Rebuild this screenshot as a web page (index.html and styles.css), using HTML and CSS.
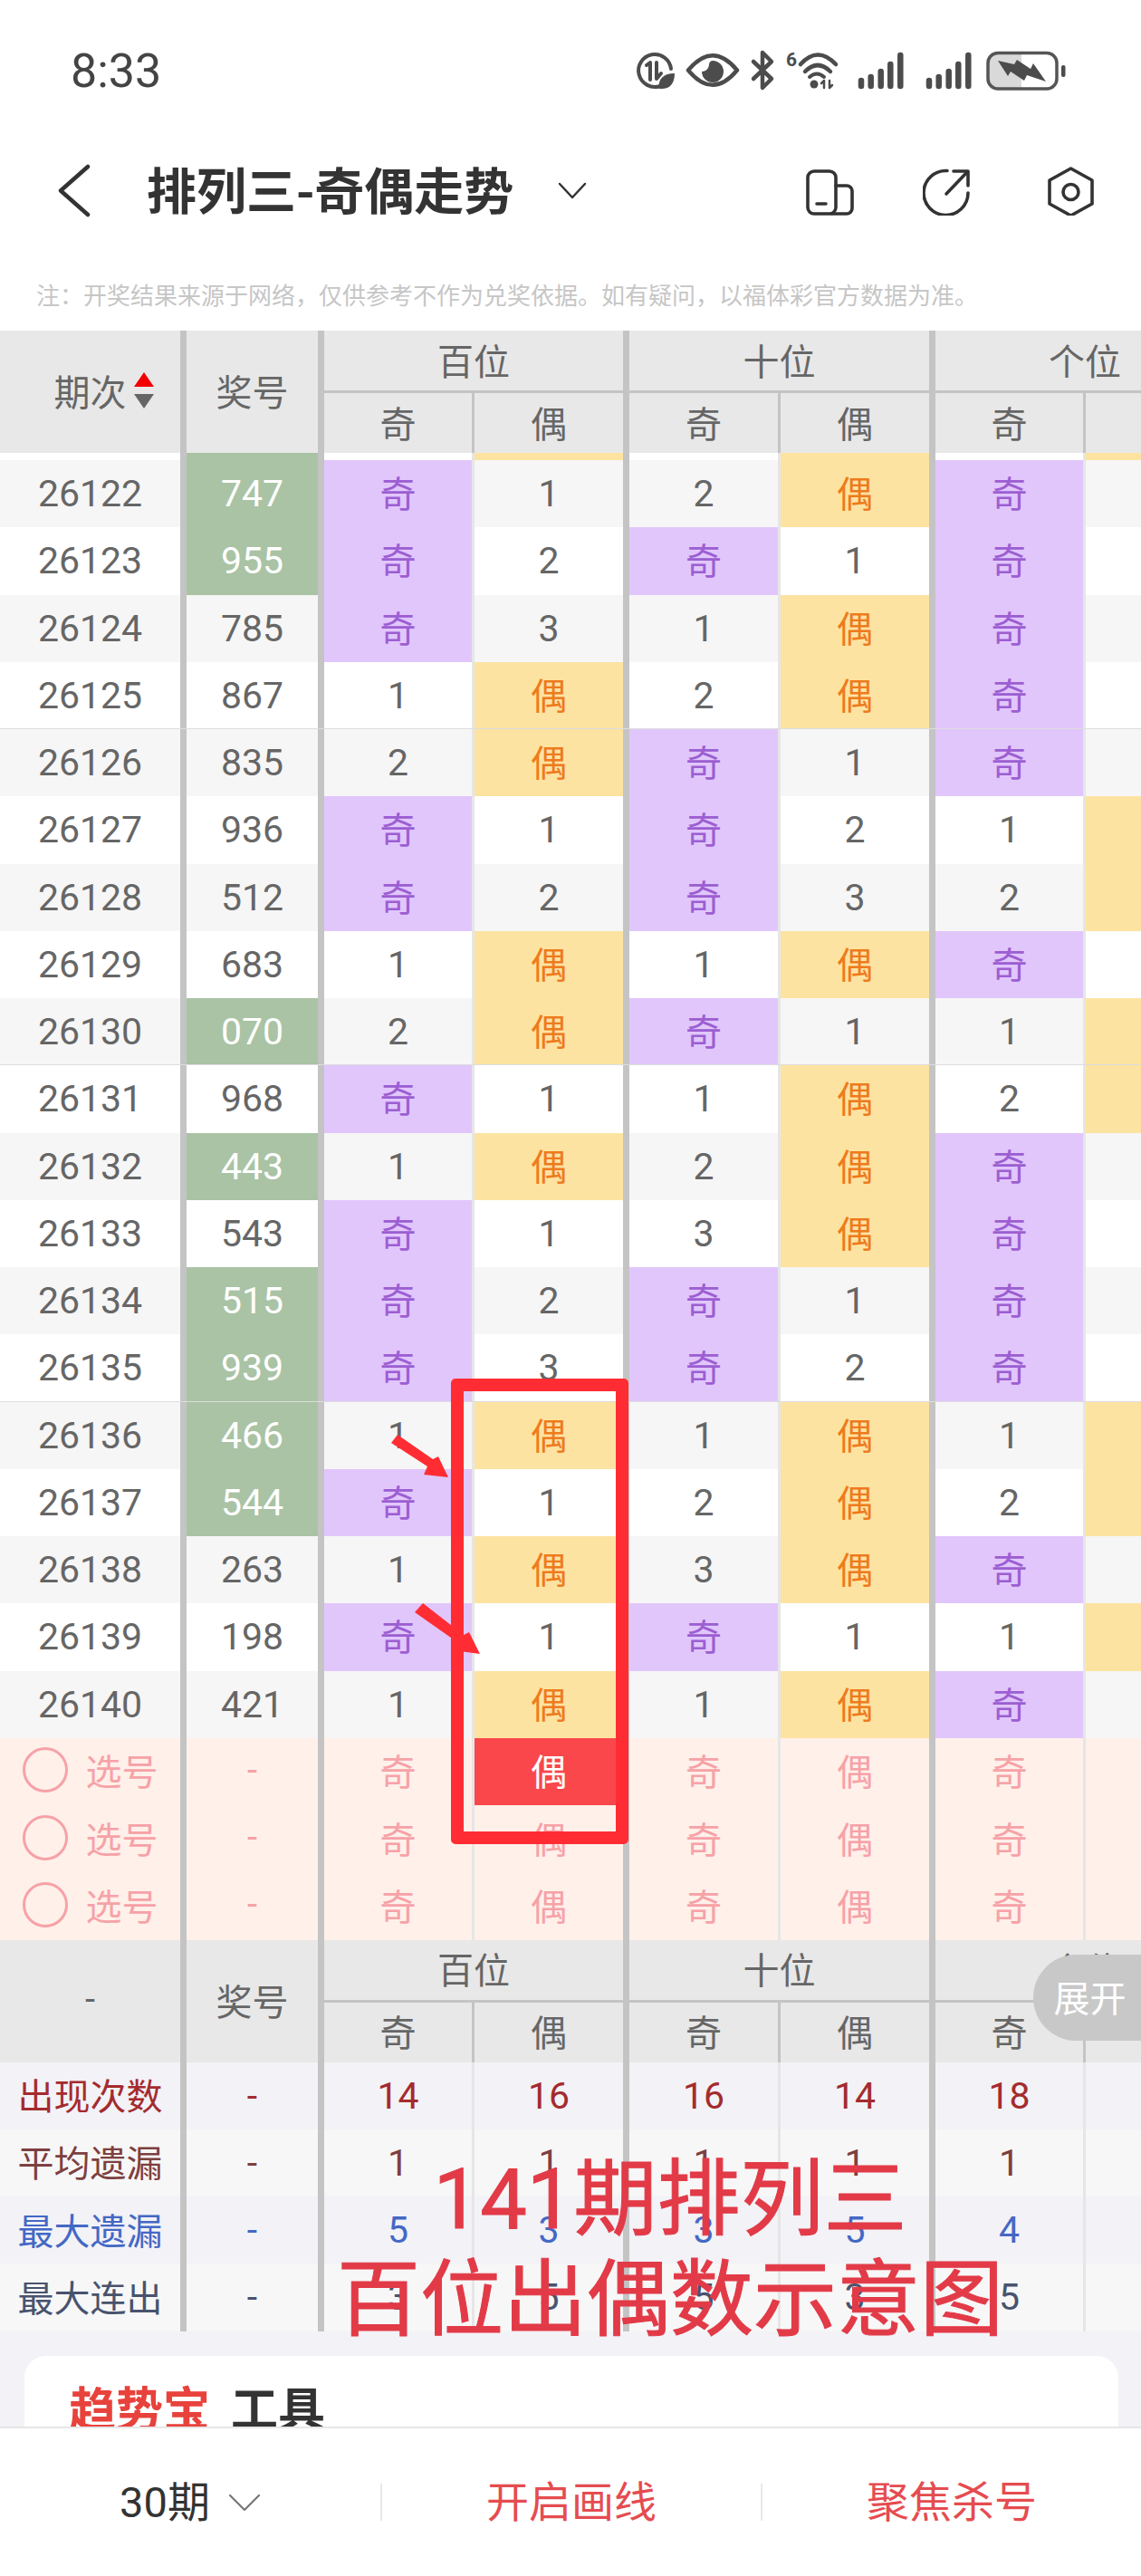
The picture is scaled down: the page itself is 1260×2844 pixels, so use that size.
FILE: index.html
```html
<!DOCTYPE html>
<html lang="zh-CN">
<head>
<meta charset="utf-8">
<title>排列三-奇偶走势</title>
<link rel="stylesheet" href="styles.css">
</head>
<body>
<div class="page">
  <div class="status">
    <span class="time">8:33</span>
    <svg class="status-icons" width="480" height="58" viewBox="700 50 480 58">
      <g fill="none" stroke="#4c4c4c" stroke-width="4" stroke-linecap="round" stroke-linejoin="round">
        <path d="M729 95A18 18 0 1 1 741 76"/>
        <path d="M714 72L718 69V88"/>
        <path d="M725 69V87L730 81"/>
        <path d="M760 77.5Q787 45 814 77.5Q787 110 760 77.5Z" stroke-width="4.5"/>
        <path d="M832 68L852 87L842 97V58L852 68L832 87" stroke-width="4.5"/>
        <path d="M884 71Q903 50 923 71" stroke-width="4.5"/>
        <path d="M889 79Q903 65 917 79" stroke-width="4.5"/>
        <path d="M894 85Q902 78 910 85" stroke-width="4"/>
        <path d="M910 97V89L907 92M916 89V97L919 94" stroke-width="2.5"/>
      </g>
      <path d="M745 81C733 81 726 87 728 98C739 99 745 93 745 81Z" fill="#4c4c4c"/>
      <path d="M787 67A12 12 0 1 1 775 79C779 79 783 76 783 71C783 69 785 67 787 67Z" fill="#4c4c4c"/>
      <circle cx="899" cy="93" r="4.5" fill="#4c4c4c"/>
      <text x="868" y="73" class="six">6</text>
      <g stroke="#4c4c4c" stroke-width="6.5" stroke-linecap="round" fill="none">
        <path d="M951 89V95M961.7 85V95M972.7 79V95M983.3 71V95M994.3 61V95"/>
        <path d="M1026 89V95M1036.7 85V95M1047.7 79V95M1058.3 71V95M1069.3 61V95"/>
      </g>
      <path d="M1097 59H1128V97H1097Q1091 97 1091 91V65Q1091 59 1097 59Z" fill="#d9d9d9"/>
      <rect x="1091" y="58.5" width="76" height="39.5" rx="11" fill="none" stroke="#555" stroke-width="3.5"/>
      <rect x="1172" y="72" width="4.5" height="13" rx="2" fill="#4c4c4c"/>
      <path d="M1102 67L1120 71L1123 66L1138 76L1141 70L1155 90L1134 83L1131 89L1116 79L1113 84Z" fill="#4c4c4c"/>
    </svg>
  </div>

  <div class="nav">
    <svg class="back" width="40" height="60" viewBox="62 180 40 60"><path d="M97 184L67 210.5L97 237"/></svg>
    <h1 class="title">排列三-奇偶走势</h1>
    <svg class="title-chevron" width="36" height="28" viewBox="610 196 36 28"><path d="M614 203L628 218L642 203"/></svg>
    <div class="actions">
      <svg class="nav-icon" width="56" height="56" viewBox="889 182 56 56"><rect x="892" y="189" width="31" height="47" rx="7"/><path d="M923 205H935A6 6 0 0 1 941 211V230A6 6 0 0 1 935 236H918"/><path d="M902 225H912"/></svg>
      <svg class="nav-icon" width="56" height="56" viewBox="1019 182 56 56"><path d="M1046 188.5A24.5 24.5 0 1 0 1069 213"/><path d="M1045 214L1068 190"/><path d="M1053 189H1069V205"/></svg>
      <svg class="nav-icon last" width="54" height="56" viewBox="1156 182 54 56"><path d="M1182.5 186L1206 199V225L1182.5 238L1159 225V199Z"/><circle cx="1182.5" cy="212" r="8.5"/></svg>
    </div>
  </div>

  <p class="note">注：开奖结果来源于网络，仅供参考不作为兑奖依据。如有疑问，以福体彩官方数据为准。</p>

  <div class="scroll">
    <div class="head">
      <div class="h-side period-head"><span>期次</span><span class="sort"><i class="up"></i><i class="down"></i></span></div>
      <div class="h-side">奖号</div>
      <div class="h-group">百位</div>
      <div class="h-group">十位</div>
      <div class="h-group">个位</div>
      <div class="h-sub thin">奇</div><div class="h-sub">偶</div>
      <div class="h-sub thin">奇</div><div class="h-sub">偶</div>
      <div class="h-sub thin">奇</div><div class="h-sub">偶</div>
    </div>

    <div class="row stub"><div></div><div class="g"></div><div></div><div class="e"></div><div></div><div class="e"></div><div></div><div class="e"></div></div>

    <div class="row alt"><div>26122</div><div class="g">747</div><div class="o">奇</div><div>1</div><div>2</div><div class="e">偶</div><div class="o">奇</div><div></div></div>
    <div class="row"><div>26123</div><div class="g">955</div><div class="o">奇</div><div>2</div><div class="o">奇</div><div>1</div><div class="o">奇</div><div></div></div>
    <div class="row alt"><div>26124</div><div>785</div><div class="o">奇</div><div>3</div><div>1</div><div class="e">偶</div><div class="o">奇</div><div></div></div>
    <div class="row end"><div>26125</div><div>867</div><div>1</div><div class="e">偶</div><div>2</div><div class="e">偶</div><div class="o">奇</div><div></div></div>
    <div class="row alt"><div>26126</div><div>835</div><div>2</div><div class="e">偶</div><div class="o">奇</div><div>1</div><div class="o">奇</div><div></div></div>
    <div class="row"><div>26127</div><div>936</div><div class="o">奇</div><div>1</div><div class="o">奇</div><div>2</div><div>1</div><div class="e"></div></div>
    <div class="row alt"><div>26128</div><div>512</div><div class="o">奇</div><div>2</div><div class="o">奇</div><div>3</div><div>2</div><div class="e"></div></div>
    <div class="row"><div>26129</div><div>683</div><div>1</div><div class="e">偶</div><div>1</div><div class="e">偶</div><div class="o">奇</div><div></div></div>
    <div class="row alt end"><div>26130</div><div class="g">070</div><div>2</div><div class="e">偶</div><div class="o">奇</div><div>1</div><div>1</div><div class="e"></div></div>
    <div class="row"><div>26131</div><div>968</div><div class="o">奇</div><div>1</div><div>1</div><div class="e">偶</div><div>2</div><div class="e"></div></div>
    <div class="row alt"><div>26132</div><div class="g">443</div><div>1</div><div class="e">偶</div><div>2</div><div class="e">偶</div><div class="o">奇</div><div></div></div>
    <div class="row"><div>26133</div><div>543</div><div class="o">奇</div><div>1</div><div>3</div><div class="e">偶</div><div class="o">奇</div><div></div></div>
    <div class="row alt"><div>26134</div><div class="g">515</div><div class="o">奇</div><div>2</div><div class="o">奇</div><div>1</div><div class="o">奇</div><div></div></div>
    <div class="row end"><div>26135</div><div class="g">939</div><div class="o">奇</div><div>3</div><div class="o">奇</div><div>2</div><div class="o">奇</div><div></div></div>
    <div class="row alt"><div>26136</div><div class="g">466</div><div>1</div><div class="e">偶</div><div>1</div><div class="e">偶</div><div>1</div><div class="e"></div></div>
    <div class="row"><div>26137</div><div class="g">544</div><div class="o">奇</div><div>1</div><div>2</div><div class="e">偶</div><div>2</div><div class="e"></div></div>
    <div class="row alt"><div>26138</div><div>263</div><div>1</div><div class="e">偶</div><div>3</div><div class="e">偶</div><div class="o">奇</div><div></div></div>
    <div class="row"><div>26139</div><div>198</div><div class="o">奇</div><div>1</div><div class="o">奇</div><div>1</div><div>1</div><div class="e"></div></div>
    <div class="row alt"><div>26140</div><div>421</div><div>1</div><div class="e">偶</div><div>1</div><div class="e">偶</div><div class="o">奇</div><div></div></div>

    <div class="row pick"><div><i class="ring"></i>选号</div><div>-</div><div>奇</div><div class="hit">偶</div><div>奇</div><div>偶</div><div>奇</div><div></div></div>
    <div class="row pick"><div><i class="ring"></i>选号</div><div>-</div><div>奇</div><div>偶</div><div>奇</div><div>偶</div><div>奇</div><div></div></div>
    <div class="row pick"><div><i class="ring"></i>选号</div><div>-</div><div>奇</div><div>偶</div><div>奇</div><div>偶</div><div>奇</div><div></div></div>

    <div class="head">
      <div class="h-side">-</div>
      <div class="h-side">奖号</div>
      <div class="h-group">百位</div>
      <div class="h-group">十位</div>
      <div class="h-group">个位</div>
      <div class="h-sub thin">奇</div><div class="h-sub">偶</div>
      <div class="h-sub thin">奇</div><div class="h-sub">偶</div>
      <div class="h-sub thin">奇</div><div class="h-sub">偶</div>
    </div>

    <div class="row stat count"><div>出现次数</div><div>-</div><div>14</div><div>16</div><div>16</div><div>14</div><div>18</div><div></div></div>
    <div class="row stat avg"><div>平均遗漏</div><div>-</div><div>1</div><div>1</div><div>1</div><div>1</div><div>1</div><div></div></div>
    <div class="row stat miss"><div>最大遗漏</div><div>-</div><div>5</div><div>3</div><div>3</div><div>5</div><div>4</div><div></div></div>
    <div class="row stat run"><div>最大连出</div><div>-</div><div>3</div><div>5</div><div>5</div><div>3</div><div>5</div><div></div></div>

    <section class="card">
      <h2 class="card-title"><span class="brand">趋势宝</span>工具</h2>
    </section>
  </div>

  <div class="bottom">
    <div class="tab period">30期<svg width="36" height="20" viewBox="250 2753 36 20"><path d="M252 2755L268 2771L284 2755"/></svg></div>
    <div class="tab action">开启画线</div>
    <div class="tab action">聚焦杀号</div>
  </div>

  <div class="expand">展开</div>
  <div class="mark-box"></div>
  <svg class="mark-arrows" width="110" height="250" viewBox="430 1580 110 250">
    <polygon points="439,1584 478,1611 484,1608 495,1631 468,1628 472,1619 432,1593"/>
    <polygon points="467,1770 512,1805 518,1802 530,1826 500,1822 505,1813 458,1780"/>
  </svg>
  <div class="mark-text">141期排列三<br>百位出偶数示意图</div>
</div>
</body>
</html>
```

FILE: styles.css
```css
* { box-sizing: border-box; }
html, body { margin: 0; padding: 0; }
body {
  width: 1260px;
  height: 2844px;
  overflow: hidden;
  font-family: Roboto, "Noto Sans CJK SC", sans-serif;
  color: #666;
  background: #fff;
}
.page {
  position: relative;
  width: 1260px;
  height: 2844px;
  display: flex;
  flex-direction: column;
  overflow: hidden;
}

/* status bar */
.status {
  height: 120px;
  padding: 50px 80px 12px 78px;
  display: flex;
  justify-content: space-between;
  align-items: center;
  flex: none;
}
.time { font-size: 52px; line-height: 58px; color: #444; }
.six { font: 700 21px Roboto, sans-serif; fill: #4c4c4c; }

/* nav */
.nav {
  height: 180px;
  flex: none;
  display: flex;
  align-items: center;
  padding: 0 50px 0 62px;
}
.back path { fill: none; stroke: #333; stroke-width: 4.5; stroke-linecap: round; stroke-linejoin: round; }
.title {
  margin: 0 0 6px 60px;
  font-size: 55px;
  line-height: 60px;
  font-weight: 700;
  color: #333;
  white-space: nowrap;
  font-family: "Noto Sans CJK SC", sans-serif;
}
.title-chevron { margin-left: 47px; }
.title-chevron path { fill: none; stroke: #333; stroke-width: 2.5; stroke-linecap: round; stroke-linejoin: round; }
.actions { margin-left: auto; display: flex; gap: 74px; }
.nav-icon.last { margin-left: 7px; }
.nav-icon * { fill: none; stroke: #333; stroke-width: 3.6; stroke-linecap: round; stroke-linejoin: round; }

.note {
  flex: none;
  height: 65px;
  margin: 0;
  padding-left: 40px;
  font-size: 26px;
  line-height: 50px;
  color: #c6c6c6;
  white-space: nowrap;
  font-family: "Noto Sans CJK SC", sans-serif;
}

/* table */
.scroll {
  flex: 1;
  min-height: 0;
  overflow: hidden;
  background: #f2f2f7;
}
.head, .row {
  width: 1370px;
  display: grid;
  grid-template-columns: 206px 152px 166px 171px 167px 171px 166px 171px;
}
.head {
  height: 135px;
  grid-template-rows: 69px 66px;
  background: #e8e8e8;
  font-size: 40px;
  color: #666;
}
.h-side, .h-group, .h-sub {
  display: flex;
  align-items: center;
  justify-content: center;
  padding-bottom: 3px;
  border-right: 7px solid #c4c4c4;
}
.h-side { grid-row: 1 / 3; }
.h-side.period-head { padding-left: 30px; }
.h-group { grid-column: span 2; border-bottom: 3px solid #c4c4c4; }
.h-sub.thin { border-right: 3px solid #c4c4c4; }

.sort { display: flex; flex-direction: column; gap: 8px; margin-left: 8px; }
.up, .down { display: block; width: 0; height: 0; border-left: 11px solid transparent; border-right: 11px solid transparent; }
.up { border-bottom: 16px solid #f40000; }
.down { border-top: 16px solid #666; }

.row {
  position: relative;
  height: 74.25px;
  background: #fff;
  font-size: 41px;
  color: #666;
}
.row.alt { background: #f6f6f6; }
.row.stub { height: 8px; }
.row.end::after {
  content: "";
  position: absolute;
  left: 0;
  right: 0;
  bottom: -2px;
  height: 3px;
  background: #ddd;
}
.row > div {
  display: flex;
  align-items: center;
  justify-content: center;
  border-right: 7px solid #c4c4c4;
}
.row > div:nth-child(3), .row > div:nth-child(5), .row > div:nth-child(7) { border-right: 3px solid #e6e6e6; }
.row .o { background: #e1c6fc; color: #9c5ed2; font-size: 40px; padding-bottom: 4px; }
.row .e { background: #fde3a1; color: #ee7b1c; font-size: 40px; padding-bottom: 4px; }
.row .g { background: #a9c3a4; color: #fff; }

.row.pick { background: #fff0ea; color: #f6a2a7; font-size: 40px; }
.row.pick > div { padding-bottom: 3px; }
.row.pick .hit { background: #f9474c; color: #fff; }
.ring {
  display: block;
  width: 50px;
  height: 50px;
  margin-right: 20px;
  border: 3px solid #f6a2a7;
  border-radius: 50%;
}

.row.stat { background: #f2f2f7; font-size: 41px; }
.row.stat.avg, .row.stat.run { background: #f7f7f7; }
.row.stat > div:first-child { font-size: 40px; padding-bottom: 3px; }
.row.count { color: #a42b2e; }
.row.avg { color: #7d4040; }
.row.miss { color: #4468c4; }
.row.run { color: #48536e; }

.card {
  margin: 27px 25px 0 27px;
  height: 200px;
  padding: 26px 0 0 49px;
  background: #fff;
  border-radius: 24px 24px 0 0;
}
.card-title {
  margin: 0;
  font-size: 52px;
  line-height: 60px;
  font-weight: 700;
  color: #333;
  font-family: "Noto Sans CJK SC", sans-serif;
}
.brand { color: #e8423c; margin-right: 23px; }

/* bottom bar */
.bottom {
  flex: none;
  height: 165px;
  display: flex;
  align-items: flex-start;
  padding-top: 61px;
  background: #fff;
  border-top: 2px solid #e6e6e6;
}
.tab {
  width: 420px;
  height: 41px;
  display: flex;
  align-items: center;
  justify-content: center;
  font-size: 47px;
  line-height: 41px;
}
.tab + .tab { border-left: 2px solid #e8e8e8; }
.period { color: #333; gap: 20px; }
.period svg path { fill: none; stroke: #777; stroke-width: 2.2; stroke-linecap: round; stroke-linejoin: round; }
.action { color: #e54c50; }

/* overlays */
.expand {
  position: absolute;
  left: 1141px;
  top: 2158px;
  width: 119px;
  height: 95px;
  padding: 0 0 3px 6px;
  display: flex;
  align-items: center;
  justify-content: center;
  background: #c8c8c8;
  color: #fff;
  font-size: 40px;
  border-radius: 48px 0 0 48px;
}
.mark-box {
  position: absolute;
  left: 498px;
  top: 1522px;
  width: 196px;
  height: 514px;
  border: 14px solid #ff2d33;
  border-radius: 5px;
}
.mark-arrows { position: absolute; left: 430px; top: 1580px; }
.mark-arrows polygon { fill: #ff2d33; }
.mark-text {
  position: absolute;
  left: 300px;
  top: 2373px;
  width: 880px;
  text-align: center;
  font-size: 92px;
  line-height: 111px;
  color: #e23a47;
  -webkit-text-stroke: 1px #e23a47;
  white-space: nowrap;
  font-family: Roboto, "Noto Sans CJK SC", sans-serif;
}
```
